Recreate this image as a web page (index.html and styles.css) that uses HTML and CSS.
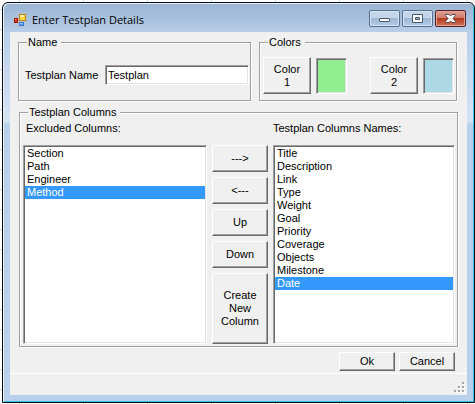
FILE: index.html
```html
<!DOCTYPE html>
<html lang="en">
<head>
<meta charset="utf-8">
<title>Enter Testplan Details</title>
<link rel="stylesheet" href="styles.css">
</head>
<body>
<main class="window">
  <header class="titlebar">
    <svg class="app-icon" width="15" height="15" viewBox="0 0 15 15" aria-hidden="true">
      <path d="M.5.5h13v13H.5zM.5 4.500h5M5.500.5v13" fill="none" stroke="#b3bfcb"/>
      <rect x="6.500" y="1.500" width="6" height="6" fill="#ffd34a" stroke="#b98410"/>
      <path d="M7 2h4v2H7z" fill="#fff0a0"/>
      <rect x="1.500" y="5.500" width="3" height="4" fill="#e2301c" stroke="#a91408"/>
      <path d="M2 6h1v1H2z" fill="#ffab9a"/>
      <rect x="6.500" y="9.500" width="4" height="3" fill="#5a98f0" stroke="#3f7cd6"/>
      <path d="M7 10h2v1H7z" fill="#b4d2ff"/>
    </svg>
    <h1 class="title">Enter Testplan Details</h1>
    <div class="caption-buttons">
      <button class="caption" type="button" aria-label="Minimize">
        <svg width="13" height="11" viewBox="0 0 13 11"><rect x="1.500" y="5.500" width="10" height="3" rx=".5" fill="#fff" stroke="#4b5568"/></svg>
      </button>
      <button class="caption" type="button" aria-label="Maximize">
        <svg width="13" height="11" viewBox="0 0 13 11"><path fill-rule="evenodd" d="M1.500 1.500h10v8h-10zM4.500 4.500v2h4v-2z" fill="#fff" stroke="#4b5568"/></svg>
      </button>
      <button class="caption caption-close" type="button" aria-label="Close">
        <svg width="13" height="11" viewBox="0 0 13 11"><path d="M1.500 1.500h3.500l1.500 1.500 1.500-1.500h3.500v1l-2.500 3 2.500 3v1H8L6.500 8 5 9.500H1.500v-1l2.500-3-2.500-3z" fill="#fff" stroke="#5b4650"/></svg>
      </button>
    </div>
  </header>
  <form class="client">
    <div class="top-row">
      <fieldset class="group">
        <legend>Name</legend>
        <div class="name-fields">
          <label for="plan-name">Testplan Name</label>
          <input class="sunken" id="plan-name" type="text" value="Testplan">
        </div>
      </fieldset>
      <fieldset class="group">
        <legend>Colors</legend>
        <div class="color-fields">
          <div class="color-pair">
            <button class="raised color-button" type="button">Color<br>1</button>
            <span class="sunken swatch swatch-green"></span>
          </div>
          <div class="color-pair">
            <button class="raised color-button" type="button">Color<br>2</button>
            <span class="sunken swatch swatch-blue"></span>
          </div>
        </div>
      </fieldset>
    </div>
    <fieldset class="group columns-group">
      <legend>Testplan Columns</legend>
      <div class="columns">
        <div class="list-panel">
          <label class="excluded-label" for="excluded">Excluded Columns:</label>
          <select class="sunken list" id="excluded" size="12">
            <option>Section</option>
            <option>Path</option>
            <option>Engineer</option>
            <option selected>Method</option>
          </select>
        </div>
        <div class="actions">
          <button class="raised" type="button">---&gt;</button>
          <button class="raised" type="button">&lt;---</button>
          <button class="raised" type="button">Up</button>
          <button class="raised" type="button">Down</button>
          <button class="raised create" type="button">Create<br>New<br>Column</button>
        </div>
        <div class="list-panel">
          <label for="included">Testplan Columns Names:</label>
          <select class="sunken list" id="included" size="12">
            <option>Title</option>
            <option>Description</option>
            <option>Link</option>
            <option>Type</option>
            <option>Weight</option>
            <option>Goal</option>
            <option>Priority</option>
            <option>Coverage</option>
            <option>Objects</option>
            <option>Milestone</option>
            <option selected>Date</option>
          </select>
        </div>
      </div>
    </fieldset>
    <div class="dialog-buttons">
      <button class="raised" type="button">Ok</button>
      <button class="raised" type="button">Cancel</button>
    </div>
    <footer class="status">
      <svg width="11" height="11" viewBox="0 0 11 11" aria-hidden="true">
        <path d="M9 1h2v2H9zM5 5h2v2H5zM9 5h2v2H9zM1 9h2v2H1zM5 9h2v2H5zM9 9h2v2H9z" fill="#fff"/>
        <path d="M8 0h2v2H8zM4 4h2v2H4zM8 4h2v2H8zM0 8h2v2H0zM4 8h2v2H4zM8 8h2v2H8z" fill="#a5a5a5"/>
      </svg>
    </footer>
  </form>
</main>
</body>
</html>
```
FILE: styles.css
```css
* {
  box-sizing: border-box;
}

body {
  margin: 0;
  min-height: 100vh;
  display: flex;
  padding: 2px 0 1px 2px;
  background:
    repeating-linear-gradient(90deg, transparent 0 19px, #d4d7dc 19px 20px, transparent 20px 64px),
    repeating-linear-gradient(#fff 0 9px, #d4d7dc 9px 10px, #fff 10px 20px);
  font: 11px/13px "Liberation Sans", Arial, sans-serif;
  color: #000;
}

button,
input,
select {
  font: inherit;
  color: inherit;
  margin: 0;
}

.window {
  flex: 1;
  display: flex;
  flex-direction: column;
  padding: 0 7px 7px 6px;
  border: 1px solid #0b0d10;
  border-radius: 6px 6px 0 0;
  background: linear-gradient(#9ab4d1, #a6bfdc 14px, #b9cfea 30px, #d3e2f3 112px, #d3e2f3 119px, #b9d0ea 121px);
  box-shadow: inset 1px 1px #e6f1fa, inset -1px -1px #35c3e8;
}

.titlebar {
  display: flex;
  align-items: center;
  height: 29px;
  padding: 5px 1px 0 4px;
}

.title {
  flex: 1;
  margin: 0 0 0 4px;
  font: 11px/16px "Open Sans", sans-serif;
}

.caption-buttons {
  display: flex;
  gap: 2px;
  margin-bottom: 3px;
}

.caption {
  display: grid;
  place-items: center;
  width: 31px;
  height: 17px;
  padding: 0;
  border: 1px solid #57708f;
  border-radius: 2px;
  background: linear-gradient(#c3d5e9 0 50%, #9db8d5 50%, #b4cce6);
  box-shadow: inset 0 0 0 1px #d5e3f2;
}

.caption-close {
  border-color: #551f25;
  background: linear-gradient(#dda095, #cf7767 50%, #b43a20 50%, #ce7457);
  box-shadow: inset 0 0 0 1px #dfa398;
}

.client {
  flex: 1;
  display: flex;
  flex-direction: column;
  margin-left: 1px;
  padding-top: 4px;
  background: #f0f0f0;
}

.top-row {
  display: grid;
  grid-template-columns: 233fr 198fr;
  gap: 8px;
  margin: 0 10px 0 8px;
}

.group {
  min-width: 0;
  margin: 0;
  padding: 0;
  border: 1px solid #a0a0a0;
  box-shadow: 1px 1px #fff, inset 1px 1px #fff;
}

.group legend {
  margin-left: 8px;
  padding: 0 4px 0 1px;
  background: #f0f0f0;
}

.name-fields {
  display: flex;
  align-items: center;
  padding: 16px 1px 15px 6px;
}

.name-fields > label {
  width: 80px;
}

.name-fields > input {
  flex: 1;
  min-width: 0;
  height: 20px;
  padding: 0 2px;
}

.color-fields {
  display: flex;
  justify-content: space-between;
  padding: 8px 2px 5px 3px;
}

.color-pair {
  display: flex;
  align-items: end;
  gap: 5px;
}

.sunken {
  border: 1px solid;
  border-color: #a0a0a0 #fff #fff #a0a0a0;
  border-radius: 0;
  outline: 0;
  background: #fff;
  box-shadow: inset 1px 1px #696969, inset -1px -1px #e3e3e3;
}

.raised {
  padding: 0;
  border: 1px solid;
  border-color: #fff #696969 #696969 #fff;
  border-radius: 0;
  background: #f0f0f0;
  box-shadow: inset -1px -1px #a0a0a0;
}

.color-button {
  width: 48px;
  height: 37px;
}

.swatch {
  width: 31px;
  height: 36px;
}

.swatch-green {
  background: #90ee90;
}

.swatch-blue {
  background: #add8e6;
}

.columns-group {
  margin: 5px 9px 0;
}

.columns {
  display: grid;
  grid-template-columns: 184fr 56px 182fr;
  gap: 5px;
  padding: 3px 2px 2px 3px;
}

.list-panel {
  display: flex;
  flex-direction: column;
  gap: 10px;
}

.excluded-label {
  padding-left: 3px;
}

.list {
  flex: 1;
  width: 100%;
  padding: 1px;
  overflow: hidden;
}

.list option {
  min-height: 13px;
  padding: 0 2px;
  line-height: 13px;
}

.list option:checked {
  background: #3399ff linear-gradient(#3399ff, #3399ff);
  color: #fff;
  -webkit-text-fill-color: #fff;
}

.actions {
  display: flex;
  flex-direction: column;
  gap: 5px;
  padding-top: 23px;
}

.actions > button {
  height: 27px;
}

.actions > .create {
  height: 71px;
}

.dialog-buttons {
  display: flex;
  justify-content: flex-end;
  gap: 4px;
  margin: 5px 12px 2px 0;
}

.dialog-buttons > button {
  width: 56px;
  height: 19px;
}

.status {
  flex: 1;
  display: flex;
  justify-content: flex-end;
  align-items: end;
  padding: 0 2px 2px;
  border-top: 1px solid #fff;
}
```
